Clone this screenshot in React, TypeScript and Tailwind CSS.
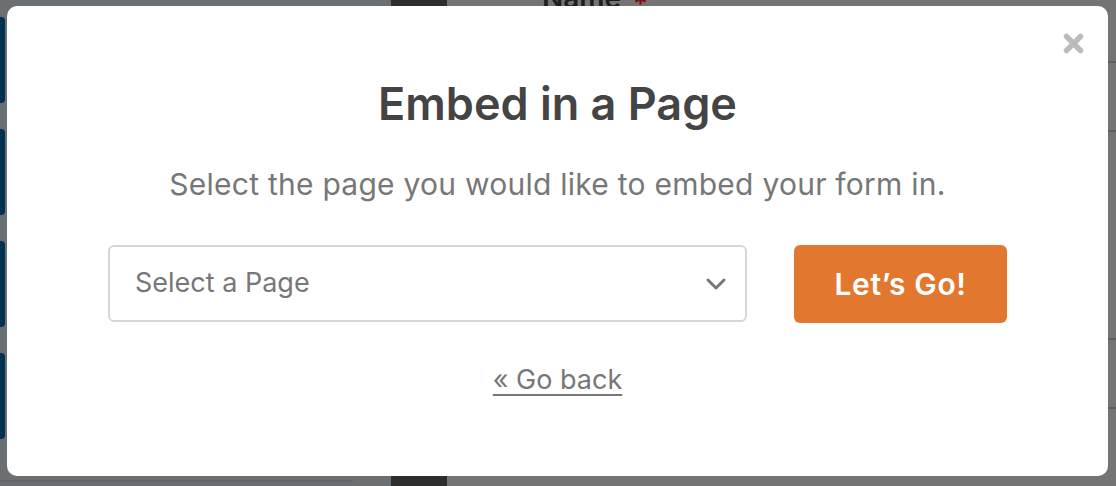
export default function App() {
  const tabs = [0, 1, 2, 3];
  return (
    <div className="relative w-[1116px] h-[486px] overflow-hidden bg-[#747474] font-['Inter',sans-serif]">
      {/* page behind the overlay */}
      <div className="flex h-full">
        <div className="w-[391px] h-full bg-[#6b6f72] flex flex-col gap-[26px] pt-[17px]">
          {tabs.map((t) => (
            <div key={t} className="w-[5px] h-[86px] rounded-r-[4px] bg-[#00304f]" />
          ))}
          <div className="mt-auto mb-[4px] w-[353px] h-[2px] bg-[#62666a]" />
        </div>
        <div className="w-[56px] h-full bg-[#2d2d2d]" />
        <div className="relative flex-1 h-full">
          <div className="absolute left-[95px] top-[-23px] text-[28px] font-semibold text-[#1e1e1e]">
            Name<span className="relative top-[6px] ml-[12px] text-[#7a1010]">*</span>
          </div>
          <div className="absolute right-0 top-[61px] w-[8px] h-[2px] bg-[#5e5e5e]" />
          <div className="absolute right-0 top-[130px] w-[8px] h-[2px] bg-[#5e5e5e]" />
          <div className="absolute right-0 top-[338px] w-[8px] h-[2px] bg-[#5e5e5e]" />
          <div className="absolute right-0 top-[407px] w-[8px] h-[2px] bg-[#5e5e5e]" />
        </div>
      </div>

      {/* modal */}
      <div className="absolute left-[7px] top-[6px] w-[1101px] h-[470px] bg-white rounded-[10px] flex flex-col items-center">
        <button className="absolute right-[23px] top-[26px] text-[#bbbbbb]">
          <svg width="23" height="23" viewBox="0 0 23 23">
            <path d="M4.5 4.5 L18.5 18.5 M18.5 4.5 L4.5 18.5" stroke="currentColor" strokeWidth="5.5" strokeLinecap="round" />
          </svg>
        </button>
        <h1 className="mt-[72px] text-[45px] leading-[52px] font-semibold text-[#444444]">Embed in a Page</h1>
        <p className="mt-[36px] text-[30px] leading-[36px] tracking-[0.25px] text-[#777777]">
          Select the page you would like to embed your form in.
        </p>
        <div className="mt-[43px] flex gap-[47px]">
          <div className="w-[639px] h-[77px] border-2 border-[#d6d6d6] rounded-[6px] flex items-center justify-between pl-[25px] pr-[18px]">
            <span className="text-[27px] text-[#777777]">Select a Page</span>
            <svg width="22" height="14" viewBox="0 0 22 14">
              <path d="M3 3 L11 11 L19 3" fill="none" stroke="#777777" strokeWidth="3" strokeLinecap="round" strokeLinejoin="round" />
            </svg>
          </div>
          <button className="w-[213px] h-[78px] rounded-[6px] bg-[#e27730] text-white text-[30px] tracking-[0.6px] font-semibold">
            Let’s Go!
          </button>
        </div>
        <a href="#" className="mt-[40px] text-[27px] leading-[34px] text-[#777777] underline underline-offset-[5px]">
          « Go back
        </a>
      </div>
    </div>
  );
}
